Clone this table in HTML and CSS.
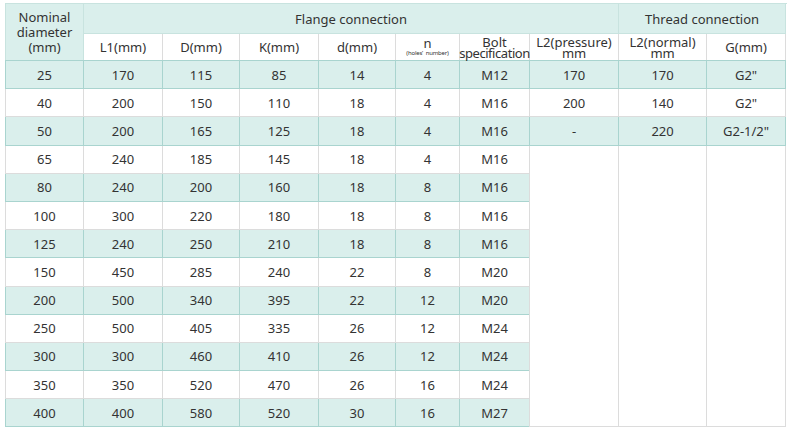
FILE: index.html
```html
<!DOCTYPE html>
<html>
<head>
<meta charset="utf-8">
<link rel="stylesheet" href="styles.css">
</head>
<body>
<table class="spec">
  <colgroup>
    <col class="c78"><col class="c79"><col class="c77"><col class="c79"><col class="c77"><col class="c64"><col class="c70"><col class="c89"><col class="c88"><col class="c79">
  </colgroup>
  <thead>
    <tr class="h1">
      <th rowspan="2" class="nom">Nominal<br>diameter<br>(mm)</th>
      <th colspan="7">Flange connection</th>
      <th colspan="3">Thread connection</th>
    </tr>
    <tr class="h2">
      <th>L1(mm)</th>
      <th>D(mm)</th>
      <th>K(mm)</th>
      <th>d(mm)</th>
      <th class="n"><span class="nn">n</span><span class="tiny">(holes’&nbsp; number)</span></th>
      <th class="two bolt"><span class="ln">Bolt</span><span class="ln sp">specification</span></th>
      <th class="two"><span class="ln">L2(pressure)</span><span class="ln">mm</span></th>
      <th class="two"><span class="ln">L2(normal)</span><span class="ln">mm</span></th>
      <th>G(mm)</th>
    </tr>
  </thead>
  <tbody>
    <tr class="t"><td>25</td><td>170</td><td>115</td><td>85</td><td>14</td><td>4</td><td>M12</td><td>170</td><td>170</td><td>G2"</td></tr>
    <tr><td>40</td><td>200</td><td>150</td><td>110</td><td>18</td><td>4</td><td>M16</td><td>200</td><td>140</td><td>G2"</td></tr>
    <tr class="t"><td>50</td><td>200</td><td>165</td><td>125</td><td>18</td><td>4</td><td>M16</td><td>-</td><td>220</td><td>G2-1/2"</td></tr>
    <tr><td>65</td><td>240</td><td>185</td><td>145</td><td>18</td><td>4</td><td>M16</td><td rowspan="10" class="blank"></td><td rowspan="10" class="blank"></td><td rowspan="10" class="blank"></td></tr>
    <tr class="t"><td>80</td><td>240</td><td>200</td><td>160</td><td>18</td><td>8</td><td>M16</td></tr>
    <tr><td>100</td><td>300</td><td>220</td><td>180</td><td>18</td><td>8</td><td>M16</td></tr>
    <tr class="t"><td>125</td><td>240</td><td>250</td><td>210</td><td>18</td><td>8</td><td>M16</td></tr>
    <tr><td>150</td><td>450</td><td>285</td><td>240</td><td>22</td><td>8</td><td>M20</td></tr>
    <tr class="t"><td>200</td><td>500</td><td>340</td><td>395</td><td>22</td><td>12</td><td>M20</td></tr>
    <tr><td>250</td><td>500</td><td>405</td><td>335</td><td>26</td><td>12</td><td>M24</td></tr>
    <tr class="t"><td>300</td><td>300</td><td>460</td><td>410</td><td>26</td><td>12</td><td>M24</td></tr>
    <tr><td>350</td><td>350</td><td>520</td><td>470</td><td>26</td><td>16</td><td>M24</td></tr>
    <tr class="t"><td>400</td><td>400</td><td>580</td><td>520</td><td>30</td><td>16</td><td>M27</td></tr>
  </tbody>
</table>
</body>
</html>
```
FILE: styles.css
```css
html, body {
  margin: 0;
  padding: 0;
  background: #ffffff;
}
body {
  padding: 3px 0 0 5px;
  font-family: "Noto Sans", "Open Sans", sans-serif;
  color: #333333;
}
.spec {
  border-collapse: collapse;
  table-layout: fixed;
  width: 780px;
  font-size: 13px;
}
.c78 { width: 78px; }
.c79 { width: 79px; }
.c77 { width: 77px; }
.c64 { width: 64px; }
.c70 { width: 70px; }
.c89 { width: 89px; }
.c88 { width: 88px; }
.spec th,
.spec td {
  border: 1px solid #dcdcdc;
  padding: 0;
  text-align: center;
  vertical-align: middle;
  font-weight: normal;
  white-space: nowrap;
}
.h1 { height: 30px; }
.h1 th {
  background: #daefec;
  border-color: #c8e3df;
}
.h1 th.nom {
  line-height: 15px;
  border-right-color: #c8e3df;
  border-bottom-color: #a9d4cf;
}
.h2 { height: 27px; }
.h2 th {
  background: #ffffff;
  border-color: #dcdcdc;
  border-bottom-color: #a9d4cf;
}
.h2 th.two {
  padding-top: 1px;
}
.ln {
  display: block;
  height: 11px;
  line-height: 11px;
}
.sp {
  letter-spacing: -0.45px;
  margin: 0 -3px;
}
.h2 th.n {
  line-height: 10px;
}
.nn {
  display: block;
  font-size: 13px;
  line-height: 12px;
}
.tiny {
  display: block;
  font-size: 6px;
  line-height: 8px;
  letter-spacing: -0.2px;
}
.spec tbody tr {
  height: 28.2px;
}
.spec tbody tr.t td {
  background: #daefec;
  border-color: #a9d4cf;
}
.spec td.blank,
.spec tbody tr td.blank {
  background: #ffffff;
  border-color: #dcdcdc;
}
```
